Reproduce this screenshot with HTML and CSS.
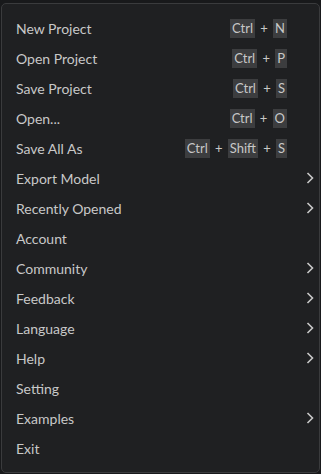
FILE: index.html
```html
<!DOCTYPE html>
<html lang="en">
<head>
    <meta charset="UTF-8">
    <meta name="viewport" content="width=device-width, initial-scale=1.0">
    <title>File Menu</title>
    <link rel="stylesheet" href="styles.css">
</head>
<body>
    <!-- File menu -->
    <div class="menu">
        <div class="menu-item">
            <span class="label">New Project</span>
            <span class="keys"><kbd>Ctrl</kbd><i>+</i><kbd>N</kbd></span>
        </div>
        <div class="menu-item">
            <span class="label">Open Project</span>
            <span class="keys"><kbd>Ctrl</kbd><i>+</i><kbd>P</kbd></span>
        </div>
        <div class="menu-item">
            <span class="label">Save Project</span>
            <span class="keys"><kbd>Ctrl</kbd><i>+</i><kbd>S</kbd></span>
        </div>
        <div class="menu-item">
            <span class="label">Open...</span>
            <span class="keys"><kbd>Ctrl</kbd><i>+</i><kbd>O</kbd></span>
        </div>
        <div class="menu-item">
            <span class="label">Save All As</span>
            <span class="keys"><kbd>Ctrl</kbd><i>+</i><kbd>Shift</kbd><i>+</i><kbd>S</kbd></span>
        </div>
        <div class="menu-item">
            <span class="label">Export Model</span>
            <svg class="arrow" viewBox="0 0 8 12"><path d="M1.5 1 L6.5 6 L1.5 11"/></svg>
        </div>
        <div class="menu-item">
            <span class="label">Recently Opened</span>
            <svg class="arrow" viewBox="0 0 8 12"><path d="M1.5 1 L6.5 6 L1.5 11"/></svg>
        </div>
        <div class="menu-item">
            <span class="label">Account</span>
        </div>
        <div class="menu-item">
            <span class="label">Community</span>
            <svg class="arrow" viewBox="0 0 8 12"><path d="M1.5 1 L6.5 6 L1.5 11"/></svg>
        </div>
        <div class="menu-item">
            <span class="label">Feedback</span>
            <svg class="arrow" viewBox="0 0 8 12"><path d="M1.5 1 L6.5 6 L1.5 11"/></svg>
        </div>
        <div class="menu-item">
            <span class="label">Language</span>
            <svg class="arrow" viewBox="0 0 8 12"><path d="M1.5 1 L6.5 6 L1.5 11"/></svg>
        </div>
        <div class="menu-item">
            <span class="label">Help</span>
            <svg class="arrow" viewBox="0 0 8 12"><path d="M1.5 1 L6.5 6 L1.5 11"/></svg>
        </div>
        <div class="menu-item">
            <span class="label">Setting</span>
        </div>
        <div class="menu-item">
            <span class="label">Examples</span>
            <svg class="arrow" viewBox="0 0 8 12"><path d="M1.5 1 L6.5 6 L1.5 11"/></svg>
        </div>
        <div class="menu-item">
            <span class="label">Exit</span>
        </div>
    </div>
</body>
</html>
```

FILE: styles.css
```css
:root {
    --page-bg: #18191b;
    --menu-bg: #1f2022;
    --menu-border: #3a3b3d;
    --text: #c8c8c8;
    --key-bg: #3c3d3f;
}

* {
    margin: 0;
    padding: 0;
    box-sizing: border-box;
}

body {
    background-color: var(--page-bg);
    color: var(--text);
    font-family: 'Lato', 'Noto Sans', sans-serif;
    font-size: 14px;
}

.menu {
    margin: 3px 1px 0 1px;
    padding: 9px 0 9px;
    background: var(--menu-bg);
    border: 1px solid var(--menu-border);
    border-radius: 5px;
    display: flex;
    flex-direction: column;
}

.menu-item {
    height: 30px;
    display: flex;
    align-items: center;
    padding: 0 5px 0 14px;
}

.label {
    flex: 1;
}

.keys {
    display: flex;
    align-items: center;
    gap: 5px;
    margin-right: 27px;
    font-size: 13px;
}

.keys kbd {
    font-family: inherit;
    background: var(--key-bg);
    height: 19px;
    line-height: 19px;
    padding: 0 2px;
}

.keys i {
    font-style: normal;
    width: 8px;
    text-align: center;
}

.arrow {
    width: 8px;
    height: 12px;
    fill: none;
    stroke: var(--text);
    stroke-width: 1.6;
}
```
